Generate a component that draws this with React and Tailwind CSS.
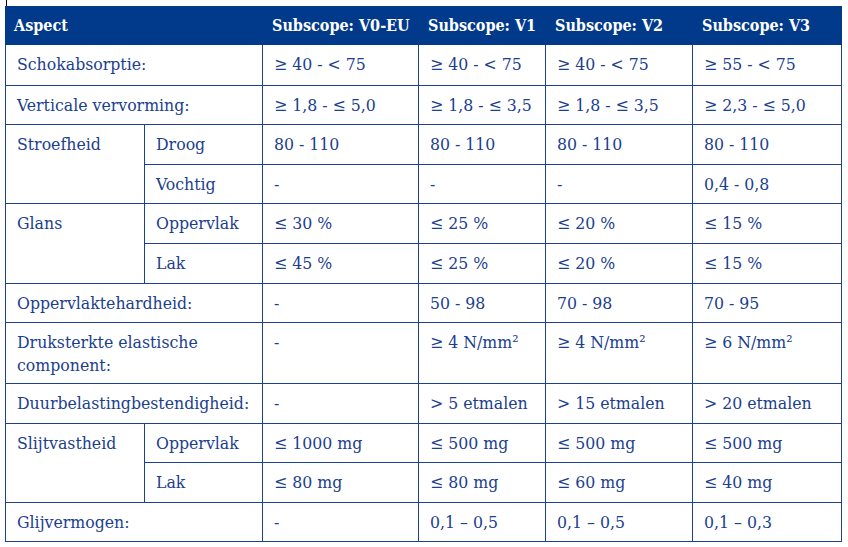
import React from "react";

const B = "border-r border-b border-[#1b418f]";
const cell = `${B} pl-[11px] pt-[8px] leading-[23px]`;

const rows = [
  { label: "Schokabsorptie:", values: ["≥ 40 - < 75", "≥ 40 - < 75", "≥ 40 - < 75", "≥ 55 - < 75"] },
  { label: "Verticale vervorming:", values: ["≥ 1,8 - ≤ 5,0", "≥ 1,8 - ≤ 3,5", "≥ 1,8 - ≤ 3,5", "≥ 2,3 - ≤ 5,0"] },
  { label: "Stroefheid", group: true, sub: "Droog", values: ["80 - 110", "80 - 110", "80 - 110", "80 - 110"] },
  { sub: "Vochtig", values: ["-", "-", "-", "0,4 - 0,8"] },
  { label: "Glans", group: true, sub: "Oppervlak", values: ["≤ 30 %", "≤ 25 %", "≤ 20 %", "≤ 15 %"] },
  { sub: "Lak", values: ["≤ 45 %", "≤ 25 %", "≤ 20 %", "≤ 15 %"] },
  { label: "Oppervlaktehardheid:", values: ["-", "50 - 98", "70 - 98", "70 - 95"] },
  { label: "Druksterkte elastische component:", values: ["-", "≥ 4 N/mm²", "≥ 4 N/mm²", "≥ 6 N/mm²"] },
  { label: "Duurbelastingbestendigheid:", values: ["-", "> 5 etmalen", "> 15 etmalen", "> 20 etmalen"] },
  { label: "Slijtvastheid", group: true, sub: "Oppervlak", values: ["≤ 1000 mg", "≤ 500 mg", "≤ 500 mg", "≤ 500 mg"] },
  { sub: "Lak", values: ["≤ 80 mg", "≤ 80 mg", "≤ 60 mg", "≤ 40 mg"] },
  { label: "Glijvermogen:", values: ["-", "0,1 – 0,5", "0,1 – 0,5", "0,1 – 0,3"] },
];

export default function App() {
  const cells = [];
  rows.forEach((r, i) => {
    if (r.group) {
      cells.push(
        <div key={`g${i}`} className={`${cell} border-l row-span-2`}>{r.label}</div>
      );
      cells.push(<div key={`s${i}`} className={cell}>{r.sub}</div>);
    } else if (r.sub) {
      cells.push(<div key={`s${i}`} className={cell}>{r.sub}</div>);
    } else {
      cells.push(
        <div key={`l${i}`} className={`${cell} border-l col-span-2 pr-[4px]`}>{r.label}</div>
      );
    }
    r.values.forEach((v, j) => {
      cells.push(<div key={`v${i}-${j}`} className={cell}>{v}</div>);
    });
  });

  const head = "bg-[#013a8b] text-white font-bold text-[16px] pl-[9px] pt-[8px] leading-[23px]";

  return (
    <div
      className="w-[848px] h-[547px] bg-white text-[#1b408f] text-[17.5px]"
      style={{ fontFamily: '"DejaVu Serif Condensed", "DejaVu Serif", serif' }}
    >
      <div className="ml-[6px] h-[6px] w-px bg-black" />
      <div className="ml-[5px] grid grid-cols-[140px_118px_156px_127px_147px_149px] grid-rows-[39px_41px_39px_40px_39px_40px_40px_39px_61px_40px_39px_40px_39px]">
        <div className={`${head} col-span-2`}>Aspect</div>
        <div className={head}>Subscope: V0-EU</div>
        <div className={head}>Subscope: V1</div>
        <div className={head}>Subscope: V2</div>
        <div className={head}>Subscope: V3</div>
        {cells}
      </div>
    </div>
  );
}
